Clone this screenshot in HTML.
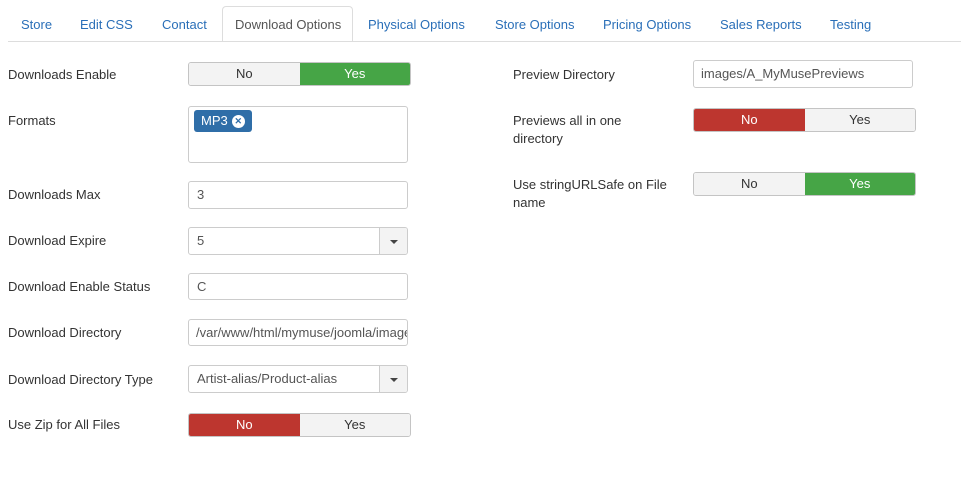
<!DOCTYPE html>
<html><head><meta charset="utf-8"><style>
*{box-sizing:border-box;margin:0;padding:0}
body{width:961px;height:489px;background:#fff;font-family:"Liberation Sans",sans-serif;font-size:13px;color:#333;position:relative;overflow:hidden}
.a{position:absolute;white-space:nowrap}
.tab{position:absolute;top:17px;color:#2a6fb8;font-size:13px}
.line{position:absolute;left:8px;right:0;top:41px;height:1px;background:#ddd}
.act{position:absolute;left:222px;top:6px;width:131px;height:36px;border:1px solid #ddd;border-bottom:1px solid #fff;border-radius:4px 4px 0 0;background:#fff}
.lbl{position:absolute;font-size:13px;color:#333;line-height:18px}
.inp{position:absolute;border:1px solid #ccc;border-radius:3px;background:#fff;padding-left:8px;font-size:13px;color:#555;overflow:hidden;white-space:nowrap}
.tg{position:absolute;height:24px;display:flex;border-radius:3px;overflow:hidden;border:1px solid #c4c4c4}
.tg div{flex:1;text-align:center;line-height:22px;font-size:13px;color:#333;background:#f3f3f3}
.tg .g{background:#46a546;color:#fff}
.tg .r{background:#bd362f;color:#fff}
.sel .btn{position:absolute;right:0;top:0;bottom:0;width:28px;border-left:1px solid #ccc;background:#f3f3f3}
.sel .btn:after{content:"";position:absolute;left:10px;top:12px;border-left:4px solid transparent;border-right:4px solid transparent;border-top:4px solid #444}
</style></head><body>
<div class="act"></div>
<div class="line"></div>
<span class="tab" style="left:21px">Store</span>
<span class="tab" style="left:80px">Edit CSS</span>
<span class="tab" style="left:162px">Contact</span>
<span class="tab" style="left:235px;color:#555">Download Options</span>
<span class="tab" style="left:368px">Physical Options</span>
<span class="tab" style="left:495px">Store Options</span>
<span class="tab" style="left:603px">Pricing Options</span>
<span class="tab" style="left:720px">Sales Reports</span>
<span class="tab" style="left:830px">Testing</span>

<div class="lbl" style="left:8px;top:66px">Downloads Enable</div>
<div class="tg" style="left:188px;top:62px;width:223px"><div>No</div><div class="g">Yes</div></div>

<div class="lbl" style="left:8px;top:112px">Formats</div>
<div class="inp" style="left:188px;top:106px;width:220px;height:57px"></div>
<div class="a" style="left:194px;top:110px;width:58px;height:22px;background:#2f6ea8;border-radius:3px;color:#fff;font-size:13px;line-height:22px;padding-left:7px;display:flex;align-items:center">MP3<span style="display:inline-block;margin-left:4px;width:13px;height:13px;border-radius:50%;background:#fff;color:#2f6ea8;font-size:9px;line-height:13px;text-align:center;font-weight:bold">✕</span></div>

<div class="lbl" style="left:8px;top:186px">Downloads Max</div>
<div class="inp" style="left:188px;top:181px;width:220px;height:28px;line-height:26px">3</div>

<div class="lbl" style="left:8px;top:232px">Download Expire</div>
<div class="inp sel" style="left:188px;top:227px;width:220px;height:28px;line-height:26px">5<div class="btn"></div></div>

<div class="lbl" style="left:8px;top:278px">Download Enable Status</div>
<div class="inp" style="left:188px;top:273px;width:220px;height:27px;line-height:25px">C</div>

<div class="lbl" style="left:8px;top:324px">Download Directory</div>
<div class="inp" style="left:188px;top:319px;width:220px;height:27px;line-height:25px;padding-left:7px">/var/www/html/mymuse/joomla/images</div>

<div class="lbl" style="left:8px;top:371px">Download Directory Type</div>
<div class="inp sel" style="left:188px;top:365px;width:220px;height:28px;line-height:26px">Artist-alias/Product-alias<div class="btn"></div></div>

<div class="lbl" style="left:8px;top:416px">Use Zip for All Files</div>
<div class="tg" style="left:188px;top:413px;width:223px"><div class="r">No</div><div>Yes</div></div>

<div class="lbl" style="left:513px;top:66px">Preview Directory</div>
<div class="inp" style="left:693px;top:60px;width:220px;height:28px;line-height:26px;padding-left:7px">images/A_MyMusePreviews</div>

<div class="lbl" style="left:513px;top:112px">Previews all in one<br>directory</div>
<div class="tg" style="left:693px;top:108px;width:223px"><div class="r">No</div><div>Yes</div></div>

<div class="lbl" style="left:513px;top:176px">Use stringURLSafe on File<br>name</div>
<div class="tg" style="left:693px;top:172px;width:223px"><div>No</div><div class="g">Yes</div></div>
</body></html>
